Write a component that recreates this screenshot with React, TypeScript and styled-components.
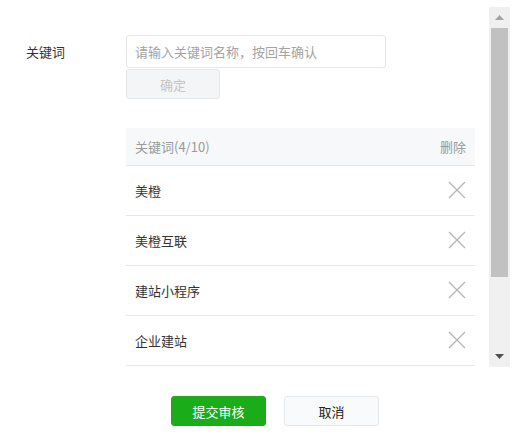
import React from "react";
import styled, { createGlobalStyle } from "styled-components";

const Global = createGlobalStyle`
  html, body { margin: 0; padding: 0; background: #fff; }
  body { font-family: "Noto Sans CJK SC", "Microsoft YaHei", sans-serif; font-size: 13px; color: #333; }
  * { box-sizing: border-box; }
`;

const Page = styled.div`
  width: 521px;
  height: 446px;
  padding-top: 7px;
  display: flex;
  flex-direction: column;
`;

const Viewport = styled.div`
  display: flex;
  height: 360px;
  width: 510px;
`;

const Content = styled.div`
  width: 489px;
  height: 360px;
  overflow: hidden;
  padding: 28px 0 0 26px;
`;

const FormRow = styled.div`
  display: flex;
  align-items: flex-start;
`;

const Label = styled.div`
  width: 100px;
  line-height: 33px;
  color: #333;
`;

const Field = styled.div`
  display: flex;
  flex-direction: column;
`;

const Input = styled.input`
  width: 260px;
  height: 33px;
  border: 1px solid #e4e8eb;
  border-radius: 3px;
  padding: 0 8px;
  font: inherit;
  font-size: 13px;
  color: #333;
  outline: none;
  &::placeholder { color: #a3a3a3; }
`;

const GhostButton = styled.button`
  margin-top: 1px;
  width: 94px;
  height: 30px;
  border: 1px solid #e4e8eb;
  border-radius: 3px;
  background: #f4f5f6;
  color: #c4c4c4;
  font: inherit;
  font-size: 13px;
  padding: 0;
`;

const Table = styled.div`
  margin-top: 29px;
  width: 349px;
`;

const HeadRow = styled.div`
  height: 38px;
  background: #f6f8f9;
  border-bottom: 1px solid #e7e7eb;
  display: flex;
  align-items: center;
  justify-content: space-between;
  padding: 0 9px;
  color: #9a9a9a;
`;

const Row = styled.div`
  height: 50px;
  border-bottom: 1px solid #e7e7eb;
  display: flex;
  align-items: center;
  justify-content: space-between;
  padding: 0 9px;
  color: #333;
`;

const CloseIcon = styled.svg`
  width: 18px;
  height: 18px;
  display: block;
  margin-top: -2px;
`;

const Scrollbar = styled.div`
  width: 21px;
  height: 360px;
  background: #f0f0f0;
  display: flex;
  flex-direction: column;
`;

const ArrowBox = styled.div`
  height: 21px;
  display: flex;
  align-items: center;
  justify-content: center;
`;

const Track = styled.div`
  flex: 1;
  display: flex;
  flex-direction: column;
`;

const Thumb = styled.div`
  margin: 0 2px;
  height: 249px;
  background: #c1c1c1;
`;

const Footer = styled.div`
  display: flex;
  gap: 18px;
  padding: 29px 0 0 171px;
`;

const Button = styled.button<{ $primary?: boolean }>`
  width: 95px;
  height: 30px;
  border-radius: 3px;
  font: inherit;
  font-size: 13px;
  padding: 0;
  border: 1px solid ${(p) => (p.$primary ? "#1aad19" : "#e4e8eb")};
  background: ${(p) => (p.$primary ? "#1aad19" : "#f9fafb")};
  color: ${(p) => (p.$primary ? "#fff" : "#222")};
`;

const keywords = ["美橙", "美橙互联", "建站小程序", "企业建站"];

const X = () => (
  <CloseIcon viewBox="0 0 18 18">
    <path d="M1 1 L17 17 M17 1 L1 17" stroke="#b5b5b5" strokeWidth="1.3" fill="none" />
  </CloseIcon>
);

export default function App() {
  return (
    <>
      <Global />
      <Page>
        <Viewport>
          <Content>
            <FormRow>
              <Label>关键词</Label>
              <Field>
                <Input placeholder="请输入关键词名称，按回车确认" />
                <GhostButton>确定</GhostButton>
                <Table>
                  <HeadRow>
                    <span>关键词(4/10)</span>
                    <span>删除</span>
                  </HeadRow>
                  {keywords.map((k) => (
                    <Row key={k}>
                      <span>{k}</span>
                      <X />
                    </Row>
                  ))}
                </Table>
              </Field>
            </FormRow>
          </Content>
          <Scrollbar>
            <ArrowBox>
              <svg width="9" height="5" viewBox="0 0 9 5">
                <path d="M4.5 0 L9 5 L0 5 Z" fill="#a3a3a3" />
              </svg>
            </ArrowBox>
            <Track>
              <Thumb />
            </Track>
            <ArrowBox>
              <svg width="9" height="5" viewBox="0 0 9 5">
                <path d="M0 0 L9 0 L4.5 5 Z" fill="#505050" />
              </svg>
            </ArrowBox>
          </Scrollbar>
        </Viewport>
        <Footer>
          <Button $primary>提交审核</Button>
          <Button>取消</Button>
        </Footer>
      </Page>
    </>
  );
}
